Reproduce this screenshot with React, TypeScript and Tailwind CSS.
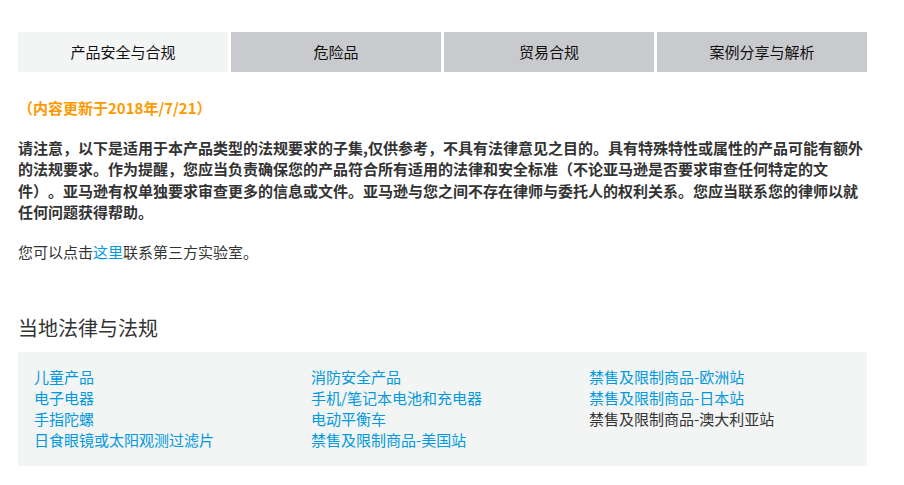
import React from "react";

const tabs = ["产品安全与合规", "危险品", "贸易合规", "案例分享与解析"];

const col1 = ["儿童产品", "电子电器", "手指陀螺", "日食眼镜或太阳观测过滤片"];
const col2 = ["消防安全产品", "手机/笔记本电池和充电器", "电动平衡车", "禁售及限制商品-美国站"];
const col3: { t: string; link: boolean }[] = [
  { t: "禁售及限制商品-欧洲站", link: true },
  { t: "禁售及限制商品-日本站", link: true },
  { t: "禁售及限制商品-澳大利亚站", link: false },
];

export default function App() {
  return (
    <div
      className="w-[904px] h-[485px] bg-white text-[#333] text-[15px] [text-spacing-trim:space-all]"
      style={{ fontFamily: '"Noto Sans CJK SC", "Noto Sans", sans-serif' }}
    >
      <div className="pl-[18px] pt-[32px] w-[867px]">
        <div className="grid grid-cols-4 gap-[3px]">
          {tabs.map((t, i) => (
            <div
              key={t}
              className={`h-[40px] flex items-center justify-center text-[15px] text-[#111] ${
                i === 0 ? "bg-[#f3f4f4]" : "bg-[#c9cacd]"
              }`}
            >
              {t}
            </div>
          ))}
        </div>

        <div className="mt-[25px] text-[#ff9900] font-bold leading-[21px]">（内容更新于2018年/7/21）</div>

        <p className="mt-[19px] font-bold leading-[21.3px] text-[#333]">
          请注意，以下是适用于本产品类型的法规要求的子集,仅供参考，不具有法律意见之目的。具有特殊特性或属性的产品可能有额外的法规要求。作为提醒，您应当负责确保您的产品符合所有适用的法律和安全标准（不论亚马逊是否要求审查任何特定的文件）。亚马逊有权单独要求审查更多的信息或文件。亚马逊与您之间不存在律师与委托人的权利关系。您应当联系您的律师以就任何问题获得帮助。
        </p>

        <p className="mt-[19px] leading-[21px]">
          您可以点击<span className="text-[#0099dd]">这里</span>联系第三方实验室。
        </p>

        <h2 className="mt-[52px] text-[20px] leading-[28px] text-[#333]">当地法律与法规</h2>

        <div className="mt-[10px] bg-[#f3f4f4] h-[114px] pt-[14px] pl-[16px] grid grid-cols-[277px_278px_1fr] leading-[21px]">
          <div className="flex flex-col">
            {col1.map((t) => (
              <span key={t} className="text-[#0099dd]">{t}</span>
            ))}
          </div>
          <div className="flex flex-col">
            {col2.map((t) => (
              <span key={t} className="text-[#0099dd]">{t}</span>
            ))}
          </div>
          <div className="flex flex-col">
            {col3.map((c) => (
              <span key={c.t} className={c.link ? "text-[#0099dd]" : "text-[#333]"}>{c.t}</span>
            ))}
          </div>
        </div>
      </div>
    </div>
  );
}
